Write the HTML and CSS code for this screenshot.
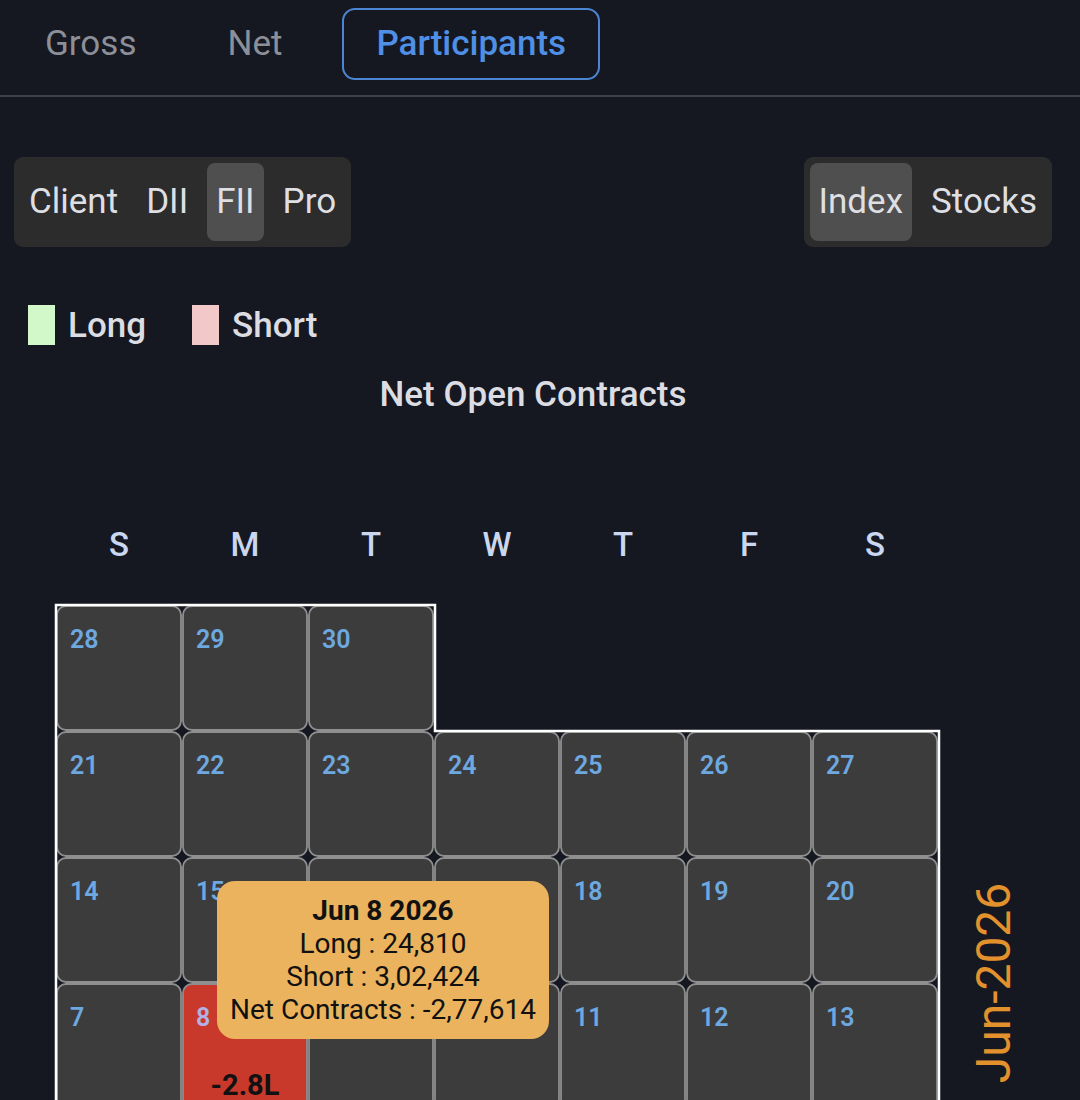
FILE: index.html
```html
<!DOCTYPE html>
<html>
    <head>
        <meta charset="utf-8">
        <title>Participants OI</title>
        <link rel="stylesheet" href="styles.css">
    </head>
    <body>

    <nav class="tabs">
        <div class="tab">Gross</div>
        <div class="tab">Net</div>
        <div class="tab active">Participants</div>
    </nav>

    <div class="controls">
        <div class="segment">
            <div class="seg-item">Client</div>
            <div class="seg-item">DII</div>
            <div class="seg-item selected">FII</div>
            <div class="seg-item">Pro</div>
        </div>
        <div class="segment">
            <div class="seg-item selected">Index</div>
            <div class="seg-item">Stocks</div>
        </div>
    </div>

    <div class="legend">
        <div class="legend-item"><span class="swatch long"></span>Long</div>
        <div class="legend-item"><span class="swatch short"></span>Short</div>
    </div>

    <h2 class="chart-title">Net Open Contracts</h2>

    <div class="chart">
        <svg class="calendar" width="1080" height="686" viewBox="0 414 1080 686">
            <g class="weekdays">
                <text x="119" y="543">S</text>
                <text x="245" y="543">M</text>
                <text x="371" y="543">T</text>
                <text x="497" y="543">W</text>
                <text x="623" y="543">T</text>
                <text x="749" y="543">F</text>
                <text x="875" y="543">S</text>
            </g>

            <!-- last week sits on top -->
            <rect class="day" x="57" y="605" width="124" height="124" rx="9"/>
            <rect class="day" x="183" y="605" width="124" height="124" rx="9"/>
            <rect class="day" x="309" y="605" width="124" height="124" rx="9"/>

            <rect class="day" x="57" y="731" width="124" height="124" rx="9"/>
            <rect class="day" x="183" y="731" width="124" height="124" rx="9"/>
            <rect class="day" x="309" y="731" width="124" height="124" rx="9"/>
            <rect class="day" x="435" y="731" width="124" height="124" rx="9"/>
            <rect class="day" x="561" y="731" width="124" height="124" rx="9"/>
            <rect class="day" x="687" y="731" width="124" height="124" rx="9"/>
            <rect class="day" x="813" y="731" width="124" height="124" rx="9"/>

            <rect class="day" x="57" y="857" width="124" height="124" rx="9"/>
            <rect class="day" x="183" y="857" width="124" height="124" rx="9"/>
            <rect class="day" x="309" y="857" width="124" height="124" rx="9"/>
            <rect class="day" x="435" y="857" width="124" height="124" rx="9"/>
            <rect class="day" x="561" y="857" width="124" height="124" rx="9"/>
            <rect class="day" x="687" y="857" width="124" height="124" rx="9"/>
            <rect class="day" x="813" y="857" width="124" height="124" rx="9"/>

            <rect class="day" x="57" y="983" width="124" height="124" rx="9"/>
            <rect class="day neg" x="183" y="983" width="124" height="124" rx="9"/>
            <rect class="day" x="309" y="983" width="124" height="124" rx="9"/>
            <rect class="day" x="435" y="983" width="124" height="124" rx="9"/>
            <rect class="day" x="561" y="983" width="124" height="124" rx="9"/>
            <rect class="day" x="687" y="983" width="124" height="124" rx="9"/>
            <rect class="day" x="813" y="983" width="124" height="124" rx="9"/>

            <path class="month-outline" d="M56 1100 V604 H435 V730 H939 V1100"/>

            <!-- 16, 17, 9 and 10 sit under the tooltip -->
            <g class="daynum">
                <text x="70" y="647">28</text>
                <text x="196" y="647">29</text>
                <text x="322" y="647">30</text>

                <text x="70" y="773">21</text>
                <text x="196" y="773">22</text>
                <text x="322" y="773">23</text>
                <text x="448" y="773">24</text>
                <text x="574" y="773">25</text>
                <text x="700" y="773">26</text>
                <text x="826" y="773">27</text>

                <text x="70" y="899">14</text>
                <text x="196" y="899">15</text>
                <text x="574" y="899">18</text>
                <text x="700" y="899">19</text>
                <text x="826" y="899">20</text>

                <text x="70" y="1025">7</text>
                <text class="on-neg" x="196" y="1025">8</text>
                <text x="574" y="1025">11</text>
                <text x="700" y="1025">12</text>
                <text x="826" y="1025">13</text>
            </g>

            <text class="value" x="245" y="1094">-2.8L</text>

            <text class="month-label" x="993" y="982" transform="rotate(-90 993 982)">Jun-2026</text>
        </svg>

        <div class="tooltip">
            <div class="tip-date">Jun 8 2026</div>
            <div>Long : 24,810</div>
            <div>Short : 3,02,424</div>
            <div>Net Contracts : -2,77,614</div>
        </div>
    </div>

</body>
</html>
```

FILE: styles.css
```css
body, html {
    margin: 0;
    padding: 0;
    height: 1100px;
    overflow: hidden;
    font-family: Roboto, "Liberation Sans", sans-serif;
}
body {
    background: #151821;
    color: #dfe0e5;
}
.tabs {
    display: flex;
    gap: 24px;
    padding: 8px 0 15px 9px;
    border-bottom: 2px solid #3d4048;
}
.tab {
    height: 72px;
    line-height: 68px;
    padding: 0 34px;
    font-size: 35px;
    color: #8c8f98;
    box-sizing: border-box;
    border: 2px solid transparent;
}
.tab:first-child {
    padding-right: 29px;
}
.tab.active {
    color: #4f8fe6;
    font-weight: 500;
    border-color: #4a86d2;
    border-radius: 13px;
    padding: 0 32px;
}
.controls {
    display: flex;
    justify-content: space-between;
    margin: 60px 28px 0 14px;
}
.segment {
    display: flex;
    gap: 10px;
    padding: 6px;
    background: #2c2c2d;
    border-radius: 9px;
}
.seg-item {
    height: 78px;
    line-height: 78px;
    padding: 0 9px;
    font-size: 35px;
    color: #dedfe3;
    border-radius: 8px;
}
.seg-item.selected {
    background: #4f4f50;
}
.legend {
    display: flex;
    gap: 46px;
    margin-top: 58px;
    padding-left: 28px;
}
.legend-item {
    display: flex;
    align-items: center;
    gap: 13px;
    height: 40px;
    font-size: 35px;
    font-weight: 500;
    color: #dcdde2;
}
.swatch {
    display: block;
    width: 27px;
    height: 40px;
}
.swatch.long {
    background: #d2f7c9;
}
.swatch.short {
    background: #f2c8c8;
}
.chart-title {
    margin: 30px 0 0 0;
    padding-right: 14px;
    height: 40px;
    line-height: 40px;
    text-align: center;
    font-size: 35px;
    font-weight: 500;
    color: #dcdde2;
}
.chart {
    position: relative;
}
.calendar {
    display: block;
}
.weekdays text {
    font-family: Roboto, sans-serif;
    font-size: 33px;
    font-weight: 500;
    fill: #cad7f1;
    text-anchor: middle;
    dominant-baseline: central;
}
.day {
    fill: #3c3c3c;
    stroke: #8f8f90;
    stroke-width: 1.8;
}
.day.neg {
    fill: #c8392b;
}
.month-outline {
    fill: none;
    stroke: #ffffff;
    stroke-width: 2.5;
}
.daynum text {
    font-family: Roboto, sans-serif;
    font-size: 25px;
    font-weight: 600;
    fill: #6ea8e0;
}
.daynum text.on-neg {
    fill: #b3b0e6;
}
.value {
    font-family: Roboto, sans-serif;
    font-size: 29px;
    font-weight: 700;
    fill: #111;
    text-anchor: middle;
}
.month-label {
    font-family: Roboto, sans-serif;
    font-size: 48px;
    fill: #e3912c;
    text-anchor: middle;
    dominant-baseline: central;
}
.tooltip {
    position: absolute;
    left: 217px;
    top: 466px;
    width: 332px;
    height: 158px;
    box-sizing: border-box;
    padding-top: 13px;
    background: #ebb35d;
    border-radius: 18px;
    color: #111;
    text-align: center;
    font-size: 28px;
    line-height: 33px;
}
.tip-date {
    font-weight: 700;
}
```
